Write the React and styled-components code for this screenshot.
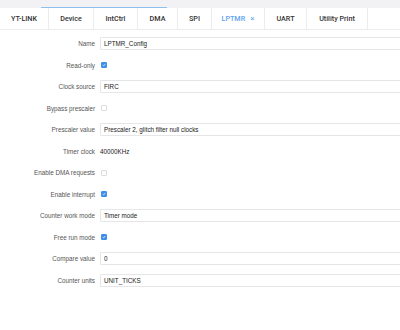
import React from "react";
import styled, { createGlobalStyle } from "styled-components";

const Global = createGlobalStyle`
  html, body { margin: 0; padding: 0; background: #ffffff; }
  body { font-family: "Liberation Sans", Arial, sans-serif; overflow: hidden; }
`;

const Page = styled.div`
  width: 400px;
  height: 330px;
  overflow: hidden;
  background: #ffffff;
`;

const TopStrip = styled.div`
  height: 8px;
  background: #f2f2f4;
  display: flex;
  align-items: flex-end;
  padding-left: 41px;
`;

const LoadLine = styled.div`
  width: 126px;
  height: 1px;
  background: #8cc0f0;
`;

const TabBar = styled.div`
  display: flex;
  height: 21px;
  border-bottom: 1px solid #ececee;
  background: #ffffff;
`;

const Tab = styled.div`
  width: ${(p) => p.$w}px;
  flex: none;
  display: flex;
  align-items: center;
  justify-content: center;
  gap: 5px;
  border-right: 1px solid #ececee;
  box-sizing: border-box;
  font-family: Roboto, "Liberation Sans", sans-serif;
  font-size: 7.2px;
  font-weight: 500;
  color: ${(p) => (p.$active ? "#5ea4ee" : "#333")};
`;

const Close = styled.span`
  font-weight: normal;
  font-size: 8px;
  color: #5ea4ee;
`;

const Form = styled.div`
  padding-top: 3px;
  display: flex;
  flex-direction: column;
`;

const Row = styled.div`
  display: grid;
  grid-template-columns: 100px 1fr;
  align-items: center;
  height: 21.5px;
`;

const Label = styled.div`
  text-align: right;
  padding-right: 5px;
  font-size: 6.3px;
  color: #555;
`;

const Input = styled.div`
  height: 13px;
  box-sizing: border-box;
  margin-right: -6px;
  border: 1px solid #e6e6e8;
  border-radius: 1px;
  display: flex;
  align-items: center;
  padding-left: 3px;
  font-size: 6.3px;
  color: #222;
`;

const Text = styled.div`
  font-size: 6.3px;
  color: #222;
`;

const Box = styled.div`
  width: 6px;
  height: 6px;
  margin-left: 1px;
  box-sizing: border-box;
  border-radius: 1px;
  background: ${(p) => (p.$on ? "#3d8eea" : "#ffffff")};
  border: 1px solid ${(p) => (p.$on ? "#3d8eea" : "#dcdcde")};
  display: flex;
  align-items: center;
  justify-content: center;
`;

const Check = ({ on }) => (
  <Box $on={on}>
    {on && (
      <svg width="4" height="4" viewBox="0 0 8 8">
        <path d="M1.2 4.2 L3.2 6 L6.8 1.8" fill="none" stroke="#fff" strokeWidth="1.4" />
      </svg>
    )}
  </Box>
);

const tabs = [
  ["YT-LINK", 49],
  ["Device", 45],
  ["IntCtrl", 44],
  ["DMA", 40],
  ["SPI", 34],
  ["LPTMR", 53, true],
  ["UART", 42],
  ["Utility Print", 61],
];

const rows = [
  ["Name", "input", "LPTMR_Config"],
  ["Read-only", "check", true],
  ["Clock source", "input", "FIRC"],
  ["Bypass prescaler", "check", false],
  ["Prescaler value", "input", "Prescaler 2, glitch filter null clocks"],
  ["Timer clock", "text", "40000KHz"],
  ["Enable DMA requests", "check", false],
  ["Enable interrupt", "check", true],
  ["Counter work mode", "input", "Timer mode"],
  ["Free run mode", "check", true],
  ["Compare value", "input", "0"],
  ["Counter units", "input", "UNIT_TICKS"],
];

export default function App() {
  return (
    <Page>
      <Global />
      <TopStrip>
        <LoadLine />
      </TopStrip>
      <TabBar>
        {tabs.map(([t, w, a]) => (
          <Tab key={t} $w={w} $active={a}>
            {t}
            {a && <Close>×</Close>}
          </Tab>
        ))}
      </TabBar>
      <Form>
        {rows.map(([l, kind, v]) => (
          <Row key={l}>
            <Label>{l}</Label>
            {kind === "input" && <Input>{v}</Input>}
            {kind === "check" && <Check on={v} />}
            {kind === "text" && <Text>{v}</Text>}
          </Row>
        ))}
      </Form>
    </Page>
  );
}
